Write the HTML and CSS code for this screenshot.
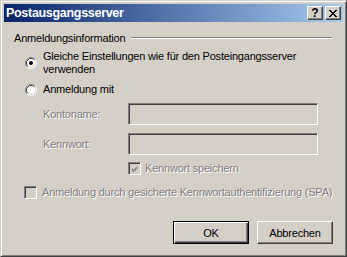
FILE: index.html
```html
<!DOCTYPE html>
<html lang="de">
<head>
<meta charset="UTF-8">
<title>Postausgangsserver</title>
<link rel="stylesheet" href="styles.css">
</head>
<body>
<div class="window">
  <div class="titlebar">
    <span class="title">Postausgangsserver</span>
    <div class="caption-buttons">
      <button class="cap-btn help">?</button>
      <button class="cap-btn close">
        <svg width="8" height="7" viewBox="0 0 8 7"><path d="M0 0h2v1h-2zM6 0h2v1h-2zM1 1h2v1h-2zM5 1h2v1h-2zM2 2h4v1h-4zM3 3h2v1h-2zM2 4h4v1h-4zM1 5h2v1h-2zM5 5h2v1h-2zM0 6h2v1h-2zM6 6h2v1h-2z" fill="#000"/></svg>
      </button>
    </div>
  </div>

  <div class="body">
    <div class="group-head">
      <span>Anmeldungsinformation</span>
      <div class="group-line"></div>
    </div>

    <div class="row radio-row two-lines">
      <span class="radio checked">
        <svg width="12" height="12" viewBox="0 0 12 12">
          <circle cx="6" cy="6" r="5" fill="#fff"/>
          <path d="M2.11 9.89 A5.5 5.5 0 0 1 9.89 2.11" fill="none" stroke="#808080"/>
          <path d="M9.89 2.11 A5.5 5.5 0 0 1 2.11 9.89" fill="none" stroke="#fff"/>
          <path d="M2.82 9.18 A4.5 4.5 0 0 1 9.18 2.82" fill="none" stroke="#404040"/>
          <path d="M9.18 2.82 A4.5 4.5 0 0 1 2.82 9.18" fill="none" stroke="#d4d0c8"/>
          <circle cx="6" cy="6" r="2" fill="#000"/>
        </svg>
      </span>
      <span class="radio-text">Gleiche Einstellungen wie für den Posteingangsserver<br>verwenden</span>
    </div>

    <div class="row radio-row second">
      <span class="radio">
        <svg width="12" height="12" viewBox="0 0 12 12">
          <circle cx="6" cy="6" r="5" fill="#fff"/>
          <path d="M2.11 9.89 A5.5 5.5 0 0 1 9.89 2.11" fill="none" stroke="#808080"/>
          <path d="M9.89 2.11 A5.5 5.5 0 0 1 2.11 9.89" fill="none" stroke="#fff"/>
          <path d="M2.82 9.18 A4.5 4.5 0 0 1 9.18 2.82" fill="none" stroke="#404040"/>
          <path d="M9.18 2.82 A4.5 4.5 0 0 1 2.82 9.18" fill="none" stroke="#d4d0c8"/>
        </svg>
      </span>
      <span class="radio-text">Anmeldung mit</span>
    </div>

    <div class="row field-row first">
      <label class="field-label disabled">Kontoname:</label>
      <div class="textbox"></div>
    </div>

    <div class="row field-row">
      <label class="field-label disabled">Kennwort:</label>
      <div class="textbox"></div>
    </div>

    <div class="row check-row save">
      <span class="checkbox">
        <svg width="9" height="9" viewBox="0 0 9 9"><path d="M1 3h1v3h-1zM2 4h1v3h-1zM3 5h1v3h-1zM4 4h1v3h-1zM5 3h1v3h-1zM6 2h1v3h-1zM7 1h1v3h-1z" fill="#808080"/></svg>
      </span>
      <span class="disabled">Kennwort speichern</span>
    </div>

    <div class="row check-row spa">
      <span class="checkbox"></span>
      <span class="disabled">Anmeldung durch gesicherte Kennwortauthentifizierung (SPA)</span>
    </div>

    <div class="actions">
      <button class="btn default">OK</button>
      <button class="btn">Abbrechen</button>
    </div>
  </div>
</div>
</body>
</html>
```

FILE: styles.css
```css
html, body {
  margin: 0;
  padding: 0;
}
body {
  font-family: "Liberation Sans", Arial, sans-serif;
  font-size: 11px;
  letter-spacing: -0.2px;
  color: #000;
  background: #d4d0c8;
}
.window {
  width: 347px;
  height: 257px;
  box-sizing: border-box;
  background: #d4d0c8;
  border: 1px solid;
  border-color: #d4d0c8 #404040 #404040 #d4d0c8;
  box-shadow: inset 1px 1px #fff, inset -1px -1px #808080;
  padding: 3px;
  display: flex;
  flex-direction: column;
}
.titlebar {
  height: 18px;
  background: linear-gradient(to right, #0a246a, #a6caf0);
  display: flex;
  align-items: center;
  justify-content: space-between;
  padding: 0 2px;
}
.title {
  color: #fff;
  font-weight: bold;
  font-size: 12.5px;
  letter-spacing: -0.3px;
}
.caption-buttons {
  display: flex;
  gap: 2px;
}
.cap-btn {
  width: 16px;
  height: 14px;
  padding: 0;
  margin: 0;
  box-sizing: border-box;
  background: #d4d0c8;
  border: 1px solid;
  border-color: #fff #404040 #404040 #fff;
  box-shadow: inset -1px -1px #808080;
  display: flex;
  align-items: center;
  justify-content: center;
  font-family: "Liberation Sans", Arial, sans-serif;
  font-weight: bold;
  font-size: 12px;
  line-height: 12px;
  color: #000;
}
.body {
  flex: 1;
  padding: 10px 0 0 0;
  display: flex;
  flex-direction: column;
}
.row {
  display: flex;
  align-items: center;
  line-height: 13px;
}
.group-head {
  display: flex;
  align-items: center;
  line-height: 13px;
  padding-left: 10px;
  padding-right: 11px;
}
.group-line {
  flex: 1;
  margin-left: 6px;
  border-top: 1px solid #808080;
  border-bottom: 1px solid #fff;
  margin-top: -2px;
}
.radio-row {
  padding-left: 21px;
  margin-top: 5px;
}
.radio-row.second {
  margin-top: 7px;
}
.radio {
  width: 12px;
  height: 12px;
  margin-right: 6px;
  display: flex;
}
.radio-text {
  line-height: 13px;
}
.disabled {
  color: #808080;
  text-shadow: 1px 1px 0 #fff;
}
.field-row {
  padding-left: 39px;
  margin-top: 8px;
}
.field-row.first {
  margin-top: 7px;
}
.field-label {
  width: 85px;
}
.textbox {
  width: 190px;
  height: 22px;
  box-sizing: border-box;
  border: 1px solid;
  border-color: #808080 #fff #fff #808080;
  box-shadow: inset 1px 1px #404040, inset -1px -1px #d4d0c8;
  background: #d4d0c8;
}
.check-row {
  margin-top: 7px;
}
.check-row.save {
  padding-left: 124px;
}
.check-row.spa {
  padding-left: 20px;
  margin-top: 11px;
}
.checkbox {
  width: 13px;
  height: 13px;
  box-sizing: border-box;
  border: 1px solid;
  border-color: #808080 #fff #fff #808080;
  box-shadow: inset 1px 1px #404040, inset -1px -1px #d4d0c8;
  background: #d4d0c8;
  padding: 2px;
  margin-right: 4px;
  display: flex;
}
.check-row.spa .checkbox {
  margin-right: 5px;
}
.actions {
  display: flex;
  justify-content: flex-end;
  gap: 8px;
  padding-right: 10px;
  margin-top: 22px;
}
.btn {
  width: 76px;
  height: 23px;
  box-sizing: border-box;
  padding: 0;
  margin: 0;
  background: #d4d0c8;
  border: 1px solid;
  border-color: #fff #404040 #404040 #fff;
  box-shadow: inset -1px -1px #808080;
  font-family: "Liberation Sans", Arial, sans-serif;
  font-size: 11px;
  letter-spacing: -0.2px;
  color: #000;
}
.btn.default {
  border: 1px solid #000;
  box-shadow: inset 1px 1px #fff, inset -1px -1px #404040, inset -2px -2px #808080;
}
```
